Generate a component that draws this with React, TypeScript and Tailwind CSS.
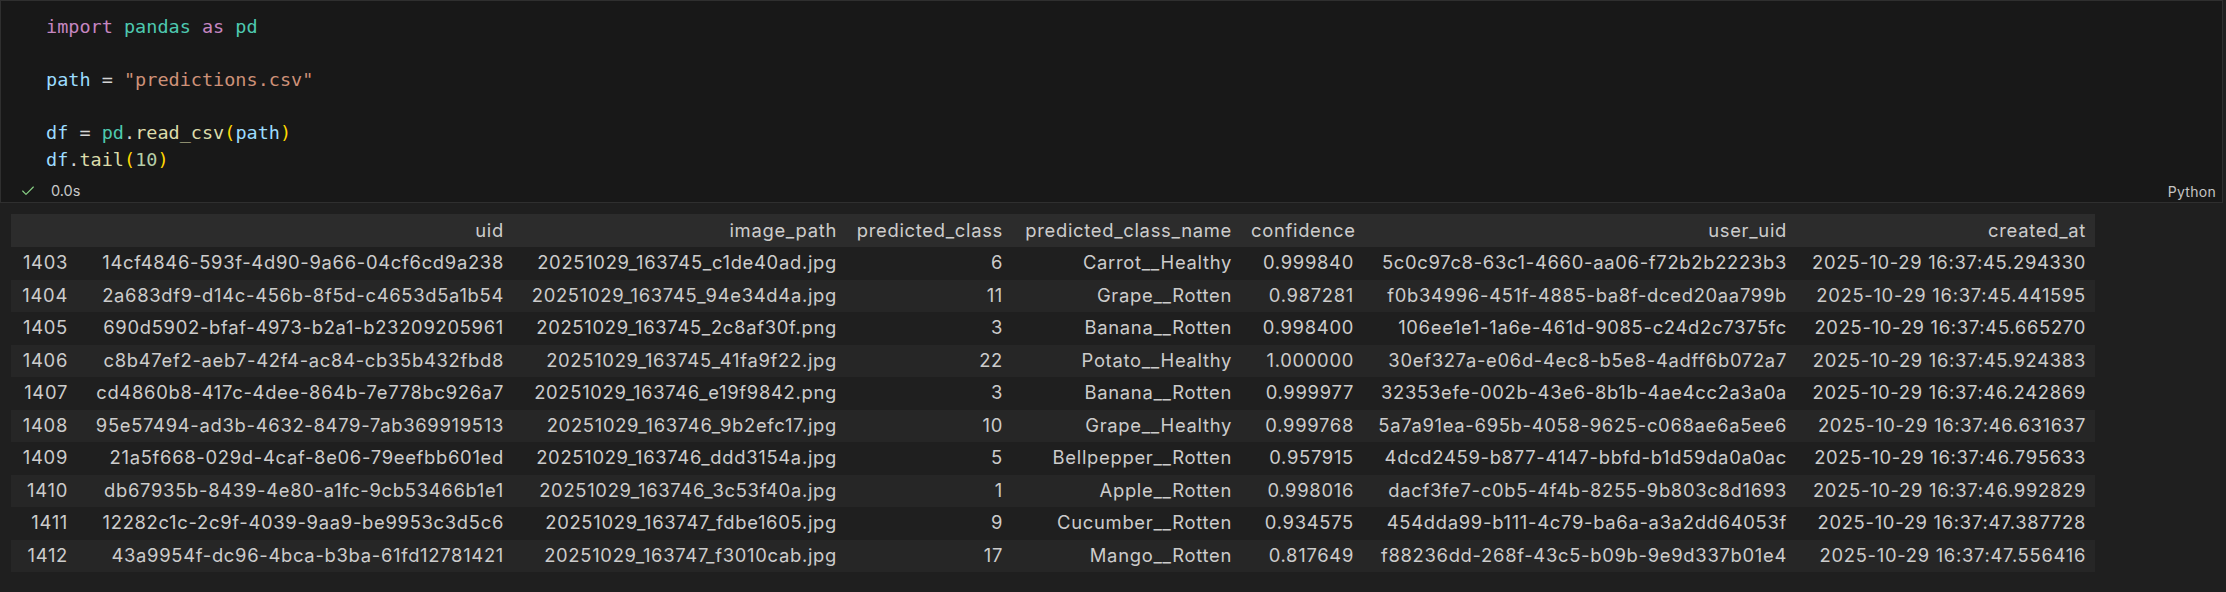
import { Check } from "lucide-react";

const COLS = [
  { key: "idx", label: "", w: "w-[66px]" },
  { key: "uid", label: "uid", w: "w-[436px]" },
  { key: "image_path", label: "image_path", w: "w-[333px]" },
  { key: "predicted_class", label: "predicted_class", w: "w-[166px]" },
  { key: "predicted_class_name", label: "predicted_class_name", w: "w-[229px]" },
  { key: "confidence", label: "confidence", w: "w-[122px]" },
  { key: "user_uid", label: "user_uid", w: "w-[433px]" },
  { key: "created_at", label: "created_at", w: "w-[299px]" },
];

const ROWS: string[][] = [
  ["1403", "14cf4846-593f-4d90-9a66-04cf6cd9a238", "20251029_163745_c1de40ad.jpg", "6", "Carrot__Healthy", "0.999840", "5c0c97c8-63c1-4660-aa06-f72b2b2223b3", "2025-10-29 16:37:45.294330"],
  ["1404", "2a683df9-d14c-456b-8f5d-c4653d5a1b54", "20251029_163745_94e34d4a.jpg", "11", "Grape__Rotten", "0.987281", "f0b34996-451f-4885-ba8f-dced20aa799b", "2025-10-29 16:37:45.441595"],
  ["1405", "690d5902-bfaf-4973-b2a1-b23209205961", "20251029_163745_2c8af30f.png", "3", "Banana__Rotten", "0.998400", "106ee1e1-1a6e-461d-9085-c24d2c7375fc", "2025-10-29 16:37:45.665270"],
  ["1406", "c8b47ef2-aeb7-42f4-ac84-cb35b432fbd8", "20251029_163745_41fa9f22.jpg", "22", "Potato__Healthy", "1.000000", "30ef327a-e06d-4ec8-b5e8-4adff6b072a7", "2025-10-29 16:37:45.924383"],
  ["1407", "cd4860b8-417c-4dee-864b-7e778bc926a7", "20251029_163746_e19f9842.png", "3", "Banana__Rotten", "0.999977", "32353efe-002b-43e6-8b1b-4ae4cc2a3a0a", "2025-10-29 16:37:46.242869"],
  ["1408", "95e57494-ad3b-4632-8479-7ab369919513", "20251029_163746_9b2efc17.jpg", "10", "Grape__Healthy", "0.999768", "5a7a91ea-695b-4058-9625-c068ae6a5ee6", "2025-10-29 16:37:46.631637"],
  ["1409", "21a5f668-029d-4caf-8e06-79eefbb601ed", "20251029_163746_ddd3154a.jpg", "5", "Bellpepper__Rotten", "0.957915", "4dcd2459-b877-4147-bbfd-b1d59da0a0ac", "2025-10-29 16:37:46.795633"],
  ["1410", "db67935b-8439-4e80-a1fc-9cb53466b1e1", "20251029_163746_3c53f40a.jpg", "1", "Apple__Rotten", "0.998016", "dacf3fe7-c0b5-4f4b-8255-9b803c8d1693", "2025-10-29 16:37:46.992829"],
  ["1411", "12282c1c-2c9f-4039-9aa9-be9953c3d5c6", "20251029_163747_fdbe1605.jpg", "9", "Cucumber__Rotten", "0.934575", "454dda99-b111-4c79-ba6a-a3a2dd64053f", "2025-10-29 16:37:47.387728"],
  ["1412", "43a9954f-dc96-4bca-b3ba-61fd12781421", "20251029_163747_f3010cab.jpg", "17", "Mango__Rotten", "0.817649", "f88236dd-268f-43c5-b09b-9e9d337b01e4", "2025-10-29 16:37:47.556416"],
];

function CodeCell() {
  return (
    <div className="mr-[3px] border border-[#2f2f2f] bg-[#181818]">
      {/* source */}
      <pre className="pl-[45px] pt-[13px] font-['DejaVu_Sans_Mono',monospace] text-[18.5px] leading-[26.5px] text-[#d4d4d4]">
        <div>
          <span className="text-[#c586c0]">import</span> <span className="text-[#4ec9b0]">pandas</span>{" "}
          <span className="text-[#c586c0]">as</span> <span className="text-[#4ec9b0]">pd</span>
        </div>
        <div>&nbsp;</div>
        <div>
          <span className="text-[#9cdcfe]">path</span> = <span className="text-[#ce9178]">"predictions.csv"</span>
        </div>
        <div>&nbsp;</div>
        <div>
          <span className="text-[#9cdcfe]">df</span> = <span className="text-[#4ec9b0]">pd</span>.
          <span className="text-[#dcdcaa]">read_csv</span>
          <span className="text-[#ffd700]">(</span>
          <span className="text-[#9cdcfe]">path</span>
          <span className="text-[#ffd700]">)</span>
        </div>
        <div>
          <span className="text-[#9cdcfe]">df</span>.<span className="text-[#dcdcaa]">tail</span>
          <span className="text-[#ffd700]">(</span>
          <span className="text-[#b5cea8]">10</span>
          <span className="text-[#ffd700]">)</span>
        </div>
      </pre>

      {/* status row */}
      <div className="mt-[8px] flex h-[20px] items-center pr-[6px] font-['Inter',sans-serif]">
        <Check size={16} strokeWidth={1.7} className="ml-[19px] text-[#89d185]" />
        <span className="ml-[15px] text-[14.5px] text-[#c8c8c8]">0.0s</span>
        <span className="ml-auto text-[14px] tracking-[0.3px] text-[#c5c5c5]">Python</span>
      </div>
      <div className="h-[1px]" />
    </div>
  );
}

function DataTable() {
  return (
    <div className="pl-[11px] pt-[11px]">
      <table className="w-[2084px] table-fixed border-collapse font-['Inter',sans-serif] text-[18.4px] tracking-[0.7px] text-[#cccccc]">
        <thead>
          <tr className="h-[33px] bg-[#2c2c2c]">
            {COLS.map((c) => (
              <th key={c.key} className={`${c.w} pl-[10px] pr-[9px] text-right font-normal whitespace-nowrap`}>
                {c.label}
              </th>
            ))}
          </tr>
        </thead>
        <tbody>
          {ROWS.map((r, i) => (
            <tr key={r[0]} className={i % 2 === 1 ? "h-[32.5px] bg-[#262626]" : "h-[32.5px] bg-[#1f1f1f]"}>
              {r.map((v, j) => (
                <td key={j} className="pl-[10px] pr-[9px] text-right whitespace-nowrap">
                  {v}
                </td>
              ))}
            </tr>
          ))}
        </tbody>
      </table>
    </div>
  );
}

export default function App() {
  return (
    <div className="h-[592px] w-[2226px] overflow-hidden bg-[#1f1f1f]">
      <CodeCell />
      <DataTable />
    </div>
  );
}
